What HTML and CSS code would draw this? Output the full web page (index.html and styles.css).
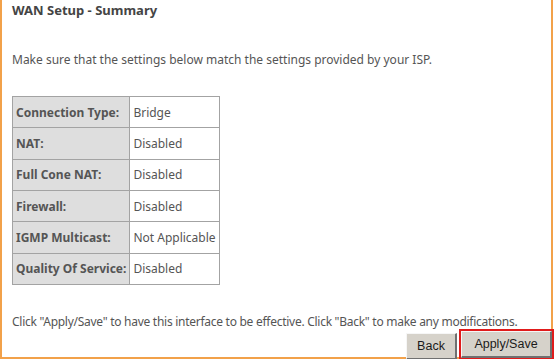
FILE: index.html
```html
<!DOCTYPE html>
<html>
<head>
<meta charset="utf-8">
<link rel="stylesheet" href="styles.css">
</head>
<body>
<div class="frame">
  <div class="title">WAN Setup - Summary</div>
  <p class="intro">Make sure that the settings below match the settings provided by your ISP.</p>
  <table class="summary">
    <tr><th>Connection Type:</th><td>Bridge</td></tr>
    <tr><th>NAT:</th><td>Disabled</td></tr>
    <tr><th>Full Cone NAT:</th><td>Disabled</td></tr>
    <tr><th>Firewall:</th><td>Disabled</td></tr>
    <tr><th>IGMP Multicast:</th><td>Not Applicable</td></tr>
    <tr><th>Quality Of Service:</th><td>Disabled</td></tr>
  </table>
  <p class="note">Click "Apply/Save" to have this interface to be effective. Click "Back" to make any modifications.</p>
  <div class="actions">
    <button class="btn back">Back</button>
    <div class="save-ring"><button class="btn save">Apply/Save</button></div>
  </div>
</div>
</body>
</html>
```
FILE: styles.css
```css
html, body {
  margin: 0;
  padding: 0;
  background: #ffffff;
}
.frame {
  width: 549px;
  height: 357px;
  border-left: 2px solid #f2a14a;
  border-right: 2px solid #f2a14a;
  border-bottom: 2px solid #f2a14a;
  font-family: "Noto Sans", "DejaVu Sans", sans-serif;
  font-size: 12px;
  color: #555555;
  position: relative;
  overflow: visible;
}
.title {
  padding: 1px 0 0 10px;
  font-weight: bold;
  color: #444444;
  font-size: 13px;
  line-height: 18px;
}
.intro {
  margin: 32px 0 0 10px;
  line-height: 17px;
  white-space: nowrap;
}
.summary {
  margin: 28px 0 0 10px;
  border-collapse: collapse;
  width: 206px;
}
.summary th, .summary td {
  border: 1px solid #a3a3a3;
  height: 30.35px;
  padding: 0 3px;
  text-align: left;
  white-space: nowrap;
  font-size: 12px;
}
.summary th {
  background: #dedede;
  font-weight: bold;
  color: #555555;
  width: 110px;
}
.summary td {
  font-weight: normal;
}
.note {
  margin: 28px 0 0 10px;
  line-height: 17px;
  white-space: nowrap;
  letter-spacing: -0.27px;
}
.actions {
  position: absolute;
  right: -3px;
  bottom: -3px;
  display: flex;
  gap: 2px;
  align-items: flex-end;
}
.btn {
  font-family: "Liberation Sans", Arial, sans-serif;
  font-size: 12.5px;
  color: #1a1a1a;
  background: #d6d2ca;
  border-style: solid;
  border-width: 1px 2px 2px 1px;
  border-color: #f6f6f6 #707070 #707070 #f6f6f6;
  padding: 0;
  margin: 0;
}
.back {
  width: 51px;
  height: 27px;
}
.save-ring {
  border: 2px solid #e01b1b;
  width: 91px;
  height: 27px;
  box-sizing: content-box;
  display: flex;
}
.save {
  width: 91px;
  height: 27px;
}
```
